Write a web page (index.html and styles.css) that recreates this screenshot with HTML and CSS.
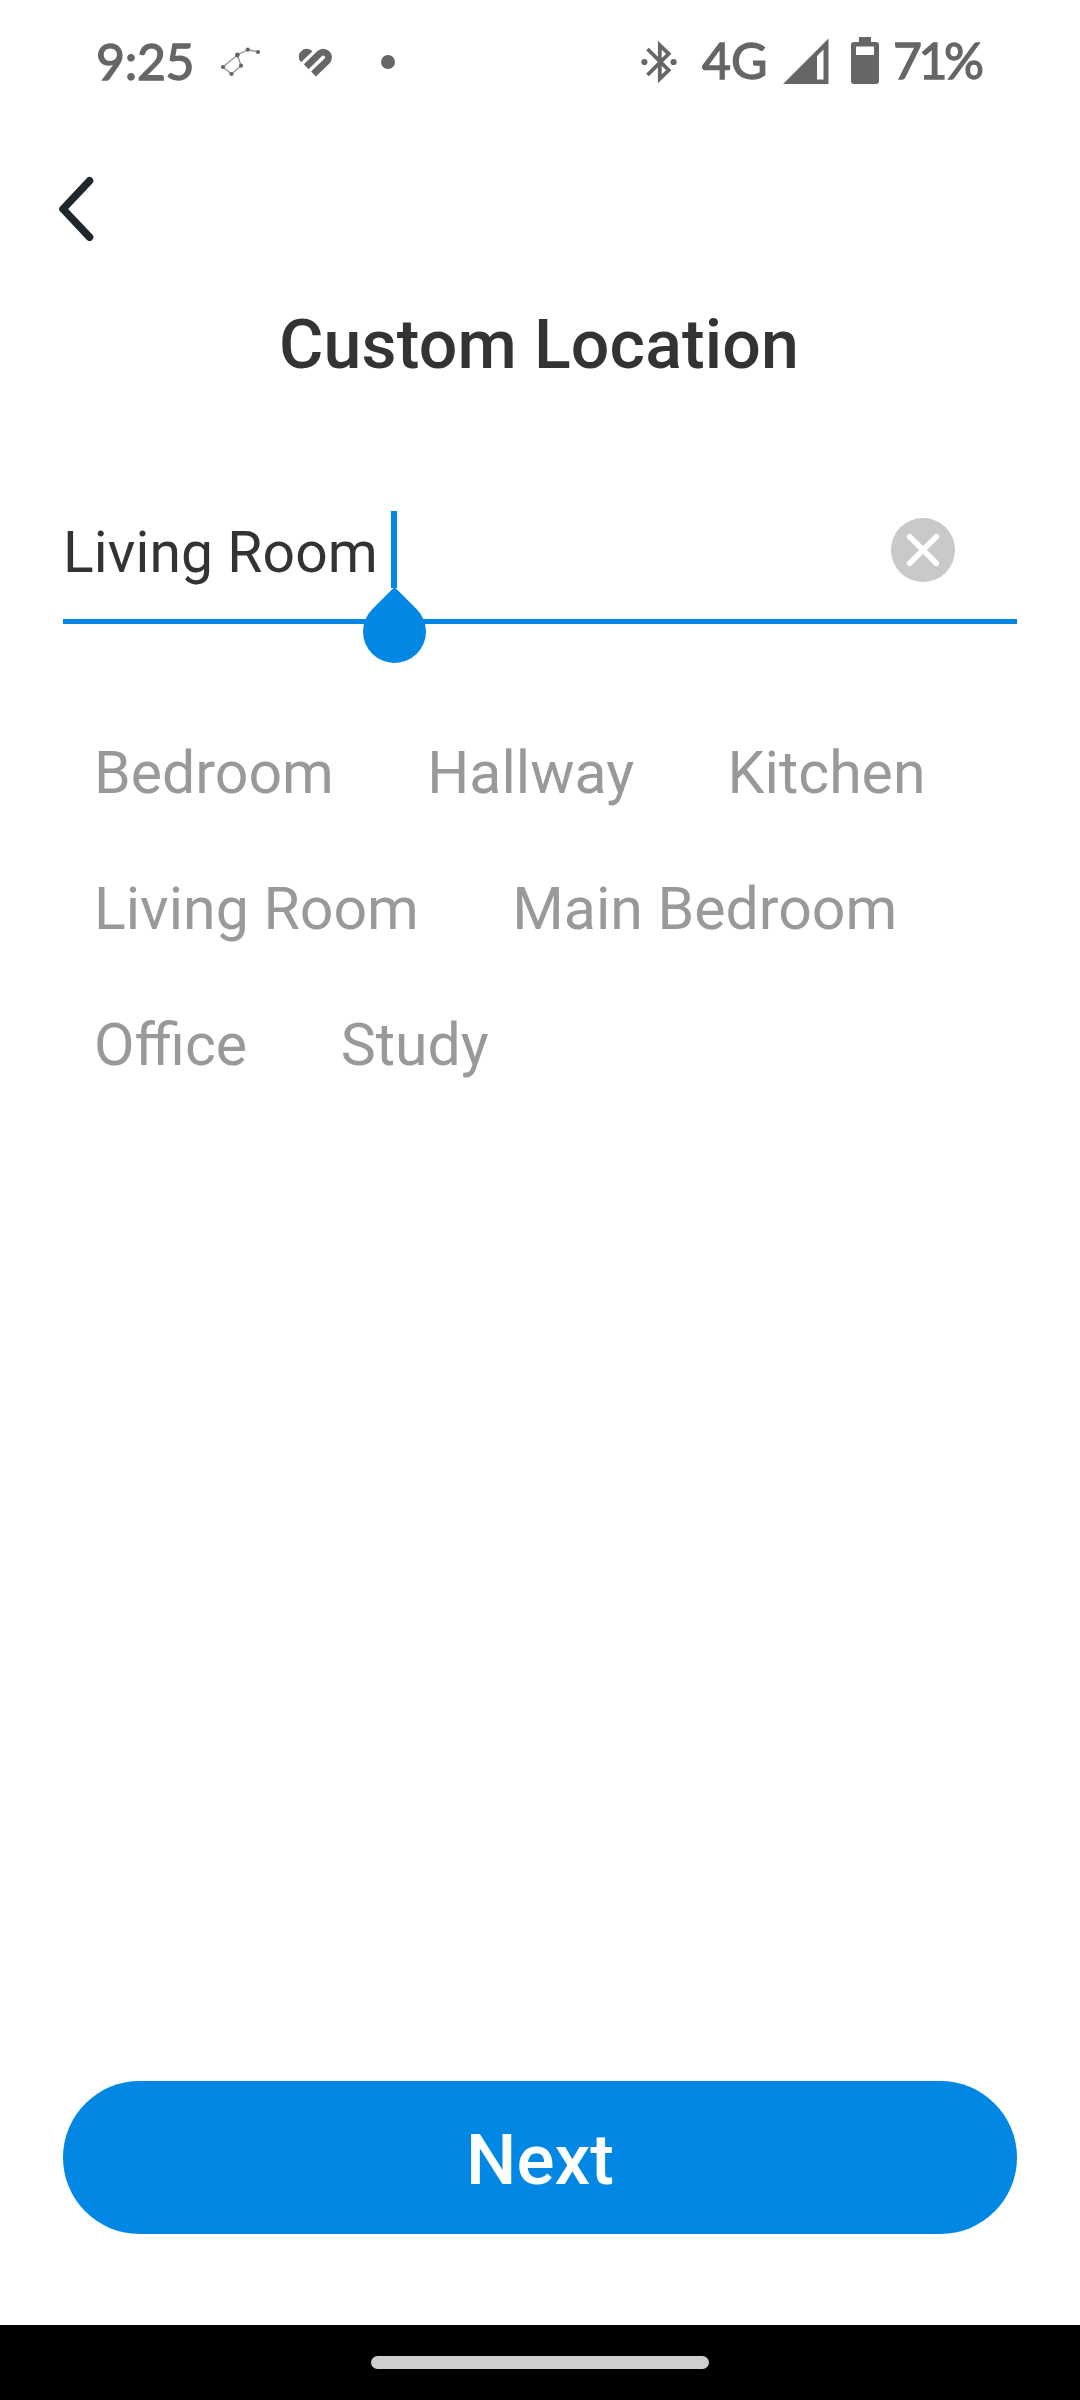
FILE: index.html
```html
<!DOCTYPE html>
<html lang="en">
<head>
  <meta charset="UTF-8">
  <title>Custom Location</title>
  <link rel="stylesheet" href="styles.css">
</head>
<body>
  <div class="screen">
    <div class="status-bar">
      <span class="clock">9:25</span>
      <svg class="icon-stars" width="46" height="40" viewBox="0 0 46 40">
        <path d="M21.4 13L7 25L15.5 32L25 23.7L21.4 13L31.8 7.7L42 10" fill="none" stroke="#999999" stroke-width="1.4"/>
        <g fill="#666666">
          <circle cx="7" cy="25" r="2.1"/>
          <circle cx="15.5" cy="32" r="2.1"/>
          <circle cx="25" cy="23.7" r="2.1"/>
          <circle cx="21.4" cy="13" r="2.4"/>
          <circle cx="31.8" cy="7.7" r="2.1"/>
          <circle cx="42" cy="10" r="2.1"/>
        </g>
      </svg>
      <svg class="icon-heart" width="38" height="36" viewBox="0 0 38 36">
        <path d="M15.5 7.3A7.9 7.9 0 0 0 4 18.3Z" fill="#666666"/>
        <path d="M9.2 22.7L22.6 9.6A5.2 5.2 0 0 1 30 17L16.5 30" fill="none" stroke="#666666" stroke-width="6.8"/>
      </svg>
      <span class="dot"></span>
      <svg class="icon-bluetooth" width="36" height="44" viewBox="0 0 36 44">
        <path d="M6.5 9L27.7 30.2L18.8 38.8V5.2L27.7 13.8L6.5 35" fill="none" stroke="#666666" stroke-width="3.8"/>
        <circle cx="3.4" cy="22" r="3.1" fill="#666666"/>
        <circle cx="32.6" cy="22" r="3.1" fill="#666666"/>
      </svg>
      <span class="network">4G</span>
      <svg class="icon-signal" width="46" height="46" viewBox="0 0 46 46">
        <path d="M0 46L45.5 0.5V46ZM34 18V41.5H40.5V11.5Z" fill="#666666" fill-rule="evenodd"/>
      </svg>
      <svg class="icon-battery" width="28" height="47" viewBox="0 0 28 47">
        <path d="M8 0H20V5H25A3 3 0 0 1 28 8V44A3 3 0 0 1 25 47H3A3 3 0 0 1 0 44V8A3 3 0 0 1 3 5H8ZM5 9.5V18H23V9.5Z" fill="#666666" fill-rule="evenodd"/>
      </svg>
      <span class="percent">71%</span>
    </div>

    <div class="nav">
      <svg class="icon-back" width="40" height="68" viewBox="0 0 40 68">
        <path d="M33.5 5.8L7 34L33.5 62.2" fill="none" stroke="#1e272b" stroke-width="7.6" stroke-linecap="round" stroke-linejoin="round"/>
      </svg>
    </div>

    <h1 class="title">Custom Location</h1>

    <div class="field">
      <span class="field-text">Living Room</span>
      <span class="caret"><span class="handle"></span></span>
      <svg class="icon-clear" width="64" height="64" viewBox="0 0 64 64">
        <circle cx="32" cy="32" r="32" fill="#c8c9cb"/>
        <path d="M18.7 18.7L45.3 45.3M45.3 18.7L18.7 45.3" stroke="#ffffff" stroke-width="5.6" stroke-linecap="round"/>
      </svg>
    </div>

    <div class="rooms">
      <span class="room">Bedroom</span>
      <span class="room">Hallway</span>
      <span class="room">Kitchen</span>
      <span class="room">Living Room</span>
      <span class="room">Main Bedroom</span>
      <span class="room">Office</span>
      <span class="room">Study</span>
    </div>

    <button class="btn-next">Next</button>

    <div class="gesture-bar">
      <div class="pill"></div>
    </div>
  </div>
</body>
</html>
```
FILE: styles.css
```css
* {
  margin: 0;
  padding: 0;
  box-sizing: border-box;
}
body {
  background: #ffffff;
  font-family: Roboto, "Liberation Sans", sans-serif;
}
.screen {
  display: flex;
  flex-direction: column;
  width: 1080px;
  height: 2400px;
}
/* status bar */
.status-bar {
  display: flex;
  align-items: center;
  height: 124px;
  padding-left: 96px;
  color: #666666;
  font-family: Lato, sans-serif;
  font-size: 50px;
  line-height: 60px;
  white-space: nowrap;
  -webkit-text-stroke: 1.3px #666666;
}
.status-bar svg {
  flex: none;
}
.clock {
  width: 120px;
  padding-bottom: 3px;
  letter-spacing: -0.3px;
}
.icon-heart {
  margin-left: 35px;
}
.dot {
  width: 14px;
  height: 14px;
  margin-left: 46px;
  border-radius: 50%;
  background: #666666;
}
.icon-bluetooth {
  margin-left: 246px;
}
.network {
  width: 80px;
  margin-left: 25px;
  padding-bottom: 4px;
}
.icon-signal {
  margin: 0 0 3px 1px;
}
.icon-battery {
  margin: 0 0 3px 22px;
}
.percent {
  margin-left: 14px;
  padding-bottom: 4px;
  letter-spacing: -3.5px;
}
/* back arrow */
.nav {
  height: 168px;
  padding: 51px 0 0 56px;
}
.title {
  height: 104px;
  padding-right: 2px;
  color: #333333;
  font-size: 68px;
  font-weight: 500;
  letter-spacing: 0.15px;
  line-height: 107px;
  text-align: center;
}
/* text input */
.field {
  display: flex;
  align-items: flex-start;
  height: 119px;
  margin: 109px 63px 0;
  border-bottom: 5px solid #0288e4;
}
.field-text {
  width: 313px;
  margin-top: 8px;
  color: #333333;
  font-size: 57px;
  letter-spacing: 0.1px;
  line-height: 80px;
  white-space: nowrap;
}
.caret {
  position: relative;
  width: 6px;
  height: 77px;
  margin: 6px 0 0 15px;
  background: #0288e4;
}
.handle {
  position: absolute;
  top: 89px;
  left: -28px;
  width: 63px;
  height: 63px;
  border-radius: 0 50% 50% 50%;
  background: #0288e4;
  transform: rotate(45deg);
}
.icon-clear {
  margin: 13px 62px 0 auto;
}
/* suggestions */
.rooms {
  display: flex;
  flex-wrap: wrap;
  align-content: flex-start;
  column-gap: 93.5px;
  padding: 81px 94px 0;
}
.room {
  height: 136px;
  color: #999999;
  font-size: 59px;
  line-height: 136px;
}
.btn-next {
  height: 153px;
  margin: auto 63px 91px;
  padding-top: 4px;
  border: 0;
  border-radius: 77px;
  background: #0288e4;
  color: #ffffff;
  font-family: inherit;
  font-size: 71px;
  font-weight: 500;
  line-height: 149px;
}
/* android gesture area */
.gesture-bar {
  display: flex;
  align-items: center;
  justify-content: center;
  height: 75px;
  background: #000000;
}
.pill {
  width: 338px;
  height: 13px;
  border-radius: 7px;
  background: #cfcfcf;
}
```
